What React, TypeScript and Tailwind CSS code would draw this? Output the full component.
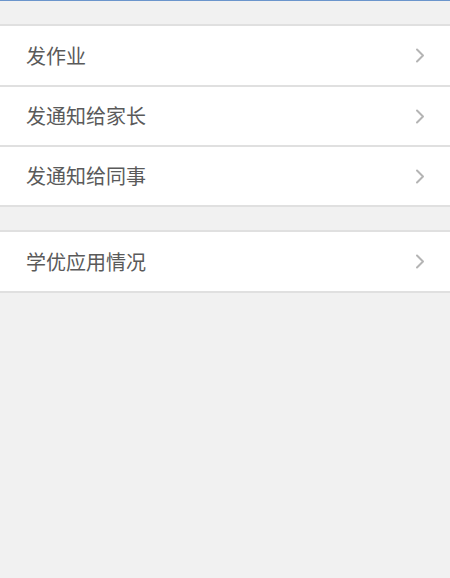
const groups = [['发作业', '发通知给家长', '发通知给同事'], ['学优应用情况']];

function Chevron() {
  return (
    <svg width="10" height="15" viewBox="0 0 10 15" fill="none" className="shrink-0">
      <path d="M2 1.5 L8 7.5 L2 13.5" stroke="#b4b4b4" strokeWidth="2" strokeLinecap="round" strokeLinejoin="round" />
    </svg>
  );
}

export default function App() {
  return (
    <div
      className="w-[450px] h-[578px] bg-[#f1f1f1] border-t border-[#6b95cc] overflow-hidden"
      style={{ fontFamily: '"Noto Sans CJK SC", "Noto Sans", sans-serif' }}
    >
      {groups.map((items, gi) => (
        <div key={gi} className="mt-[23px] bg-white border-t-2 border-b-2 border-[#e0e0e0]">
          {items.map((label, i) => (
            <div
              key={label}
              className={`flex items-center justify-between pl-[26px] pr-[25px] ${i > 0 ? 'h-[60px] border-t-2 border-[#e0e0e0]' : 'h-[59px]'}`}
            >
              <span className="text-[20px] text-[#5a5a5a]">{label}</span>
              <Chevron />
            </div>
          ))}
        </div>
      ))}
    </div>
  );
}
